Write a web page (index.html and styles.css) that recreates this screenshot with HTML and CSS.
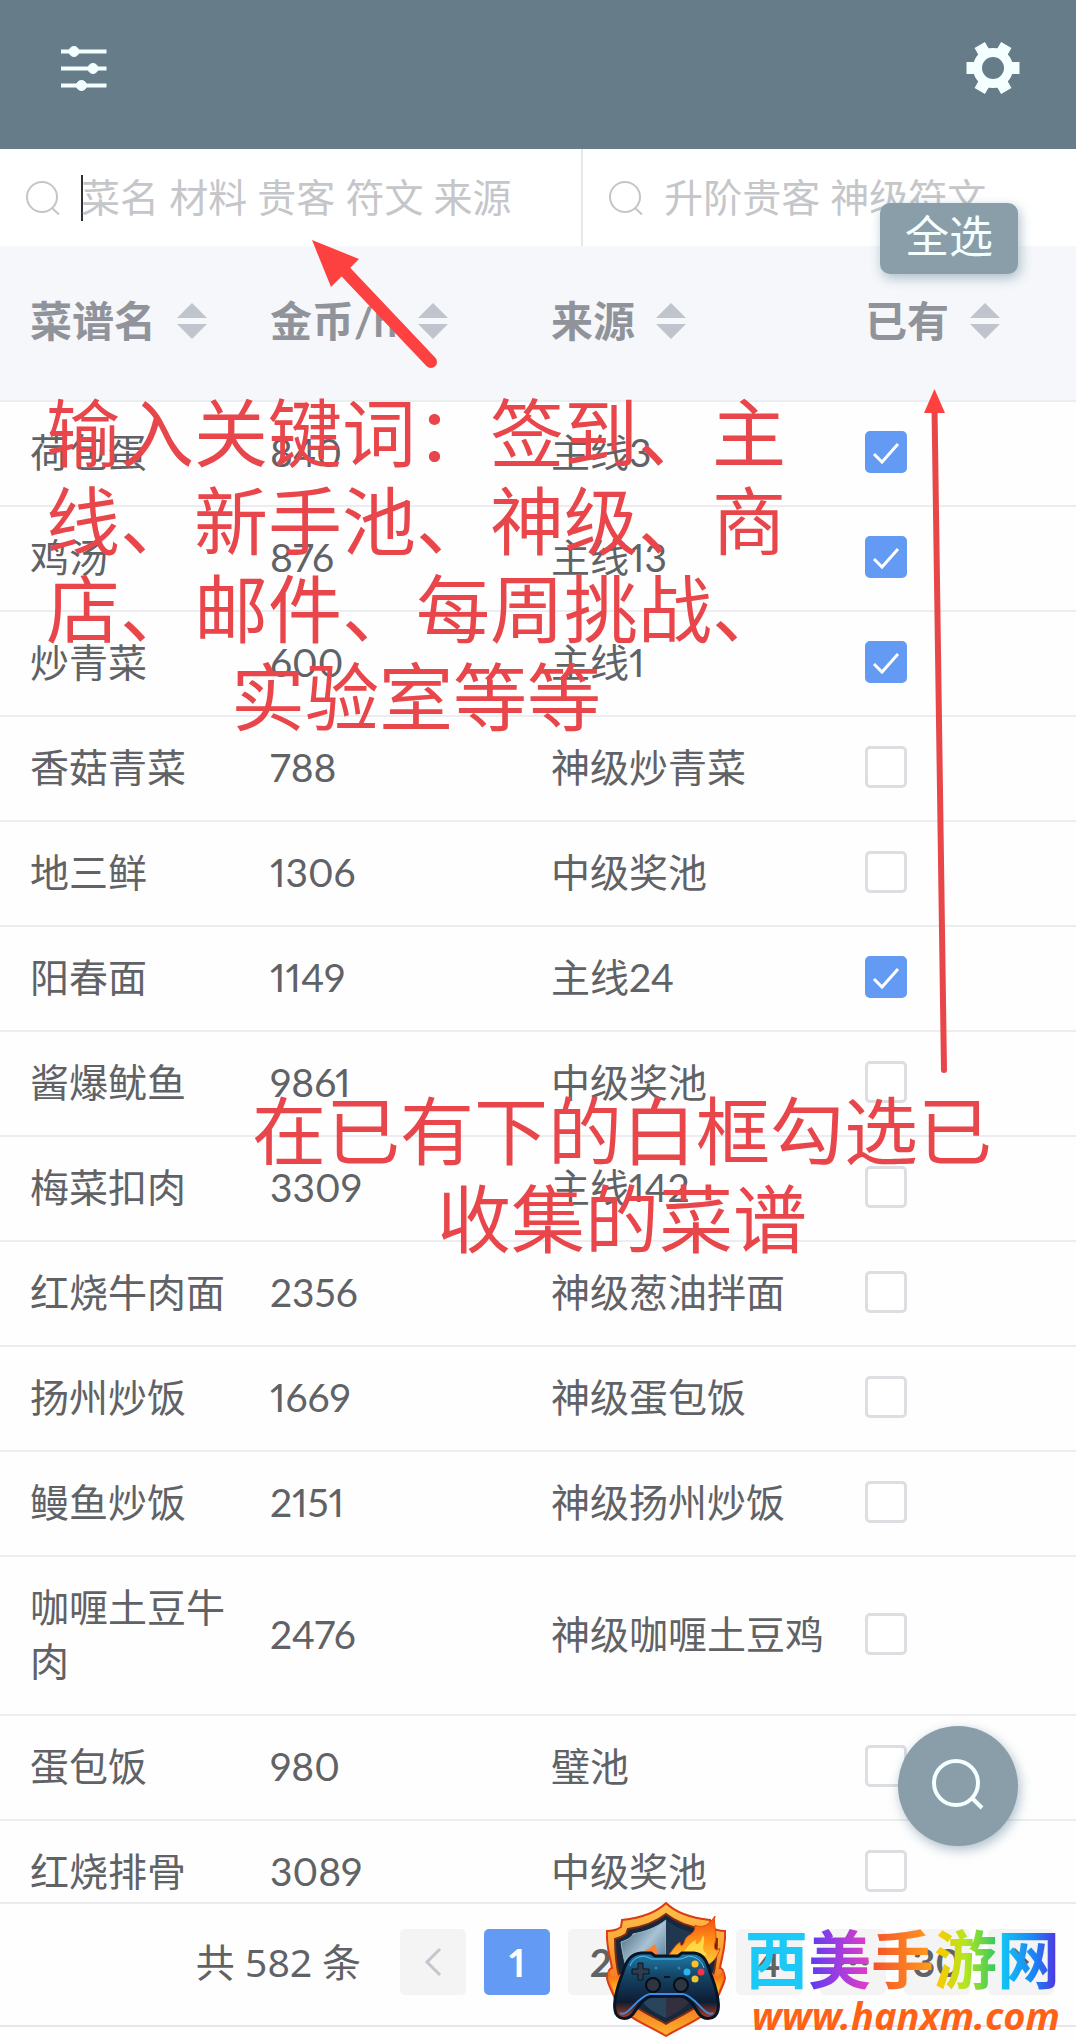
FILE: index.html
```html
<!DOCTYPE html>
<html lang="zh-CN">
  <head>
    <meta charset="UTF-8" />
    <meta name="viewport" content="width=device-width, initial-scale=1.0" />
    <title>菜谱</title>
    <link rel="stylesheet" href="styles.css">
  </head>
  <body>
    <header class="topbar">
      <button type="button" class="icon-button" aria-label="筛选">
        <svg width="56" height="56" viewBox="0 0 56 56" fill="#f4ffff" stroke="#f4ffff">
          <path d="M6 11.500H51.500M6 28.500H51.500M6 45.500H51.500" stroke-width="4" />
          <circle cx="19" cy="11.500" r="5" />
          <circle cx="38" cy="28.500" r="5" />
          <circle cx="26.500" cy="45.500" r="5" />
        </svg>
      </button>
      <button type="button" class="icon-button" aria-label="设置">
        <svg width="56" height="56" viewBox="-28 -28 56 56" fill="#f4ffff">
          <circle r="15.500" fill="none" stroke="#f4ffff" stroke-width="9" />
          <path d="M-26.500 -6H-14V6H-26.500Z" />
          <path d="M-26.500 -6H-14V6H-26.500Z" transform="rotate(60)" />
          <path d="M-26.500 -6H-14V6H-26.500Z" transform="rotate(120)" />
          <path d="M-26.500 -6H-14V6H-26.500Z" transform="rotate(180)" />
          <path d="M-26.500 -6H-14V6H-26.500Z" transform="rotate(240)" />
          <path d="M-26.500 -6H-14V6H-26.500Z" transform="rotate(300)" />
        </svg>
      </button>
    </header>

    <div class="search-row">
      <div class="search-box search-main">
        <svg class="search-icon" width="34" height="34" viewBox="0 0 34 34" fill="none" stroke="#c3c5c9" stroke-width="2">
          <circle cx="16" cy="16" r="15" />
          <path d="M26 27L33 33.500" />
        </svg>
        <span class="cursor"></span>
        <input type="text" id="keyword" aria-label="关键词" placeholder="菜名 材料 贵客 符文 来源" />
      </div>
      <div class="search-box">
        <svg class="search-icon" width="34" height="34" viewBox="0 0 34 34" fill="none" stroke="#c3c5c9" stroke-width="2">
          <circle cx="16" cy="16" r="15" />
          <path d="M26 27L33 33.500" />
        </svg>
        <input type="text" id="guest" aria-label="升阶贵客" placeholder="升阶贵客 神级符文" />
      </div>
    </div>

    <main class="table-wrap">
      <table class="recipe-table">
        <thead>
          <tr>
            <th class="col-name"><div class="th-inner">菜谱名 <span class="sort"></span></div></th>
            <th class="col-gold"><div class="th-inner">金币/h <span class="sort"></span></div></th>
            <th class="col-source"><div class="th-inner">来源 <span class="sort"></span></div></th>
            <th class="col-own"><div class="th-inner">已有 <span class="sort"></span></div></th>
          </tr>
        </thead>
        <tbody>
          <tr><td>荷包蛋</td><td>840</td><td>主线3</td><td><input type="checkbox" aria-label="荷包蛋" checked /></td></tr>
          <tr><td>鸡汤</td><td>876</td><td>主线13</td><td><input type="checkbox" aria-label="鸡汤" checked /></td></tr>
          <tr><td>炒青菜</td><td>600</td><td>主线1</td><td><input type="checkbox" aria-label="炒青菜" checked /></td></tr>
          <tr><td>香菇青菜</td><td>788</td><td>神级炒青菜</td><td><input type="checkbox" aria-label="香菇青菜" /></td></tr>
          <tr><td>地三鲜</td><td>1306</td><td>中级奖池</td><td><input type="checkbox" aria-label="地三鲜" /></td></tr>
          <tr><td>阳春面</td><td>1149</td><td>主线24</td><td><input type="checkbox" aria-label="阳春面" checked /></td></tr>
          <tr><td>酱爆鱿鱼</td><td>9861</td><td>中级奖池</td><td><input type="checkbox" aria-label="酱爆鱿鱼" /></td></tr>
          <tr><td>梅菜扣肉</td><td>3309</td><td>主线142</td><td><input type="checkbox" aria-label="梅菜扣肉" /></td></tr>
          <tr><td>红烧牛肉面</td><td>2356</td><td>神级葱油拌面</td><td><input type="checkbox" aria-label="红烧牛肉面" /></td></tr>
          <tr><td>扬州炒饭</td><td>1669</td><td>神级蛋包饭</td><td><input type="checkbox" aria-label="扬州炒饭" /></td></tr>
          <tr><td>鳗鱼炒饭</td><td>2151</td><td>神级扬州炒饭</td><td><input type="checkbox" aria-label="鳗鱼炒饭" /></td></tr>
          <tr><td>咖喱土豆牛肉</td><td>2476</td><td>神级咖喱土豆鸡</td><td><input type="checkbox" aria-label="咖喱土豆牛肉" /></td></tr>
          <tr><td>蛋包饭</td><td>980</td><td>璧池</td><td><input type="checkbox" aria-label="蛋包饭" /></td></tr>
          <tr><td>红烧排骨</td><td>3089</td><td>中级奖池</td><td><input type="checkbox" aria-label="红烧排骨" /></td></tr>
        </tbody>
      </table>
    </main>

    <nav class="pagination" aria-label="分页">
      <span class="total">共 582 条</span>
      <button type="button" aria-label="上一页">
        <svg width="20" height="30" viewBox="0 0 20 30" fill="none" stroke="#c3c6cc" stroke-width="3"><path d="M17 2L4 15L17 28" /></svg>
      </button>
      <button type="button" class="active">1</button>
      <button type="button">2</button>
      <button type="button">3</button>
      <button type="button">4</button>
      <button type="button" aria-label="更多">
        <svg width="32" height="8" viewBox="0 0 32 8" fill="#606266"><circle cx="4" cy="4" r="3.500" /><circle cx="16" cy="4" r="3.500" /><circle cx="28" cy="4" r="3.500" /></svg>
      </button>
      <button type="button">30</button>
      <button type="button" aria-label="下一页">
        <svg width="20" height="30" viewBox="0 0 20 30" fill="none" stroke="#606266" stroke-width="3"><path d="M3 2L16 15L3 28" /></svg>
      </button>
    </nav>

    <button type="button" class="select-all">全选</button>
    <button type="button" class="fab" aria-label="搜索">
      <svg width="54" height="54" viewBox="0 0 54 54" fill="none" stroke="#f4ffff" stroke-width="4">
        <circle cx="25" cy="24" r="22" />
        <path d="M41 39L51 49" />
      </svg>
    </button>

    <!-- 操作说明 -->
    <p class="note note-search">输入关键词：签到、主线、新手池、神级、商店、邮件、每周挑战、实验室等等</p>
    <p class="note note-own">在已有下的白框勾选已收集的菜谱</p>
    <svg class="arrow arrow-search" width="130" height="136" viewBox="0 0 130 136">
      <path d="M32 30L121 124" stroke="#fd4141" stroke-width="12" stroke-linecap="round" />
      <path d="M2 2L49 21L21 49Z" fill="#fd4141" />
    </svg>
    <svg class="arrow arrow-own" width="30" height="690" viewBox="0 0 30 690">
      <path d="M14.500 20L24 683" stroke="#e94649" stroke-width="6" stroke-linecap="round" />
      <path d="M14.500 2L25 26H4Z" fill="#fd4141" />
    </svg>

    <!-- logo -->
    <div class="brand">
      <svg class="brand-shield" width="120" height="136" viewBox="0 0 120 136">
        <defs>
          <linearGradient id="gold" x1="0" y1="0" x2="0" y2="1">
            <stop offset="0" stop-color="#ffc04a" />
            <stop offset="0.35" stop-color="#f9a337" />
            <stop offset="0.7" stop-color="#f0641c" />
            <stop offset="1" stop-color="#ffb52e" />
          </linearGradient>
          <linearGradient id="steel" x1="0" y1="0" x2="1" y2="1">
            <stop offset="0" stop-color="#35556f" />
            <stop offset="0.5" stop-color="#a9c3d4" />
            <stop offset="1" stop-color="#3f6480" />
          </linearGradient>
          <linearGradient id="fire" x1="0" y1="0" x2="0" y2="1">
            <stop offset="0" stop-color="#f04a12" />
            <stop offset="0.5" stop-color="#ff9416" />
            <stop offset="1" stop-color="#ffd040" />
          </linearGradient>
          <linearGradient id="pad" x1="0" y1="0" x2="0" y2="1">
            <stop offset="0" stop-color="#1f7dac" />
            <stop offset="0.35" stop-color="#154466" />
            <stop offset="0.75" stop-color="#0d1c33" />
            <stop offset="1" stop-color="#b8401c" />
          </linearGradient>
        </defs>
        <path d="M60 1C50 11 34 16 16 18L15 25C11 28 6 29 1 29C0 44 4 54 6 66C4 66 2 70 1 76C2 84 8 92 10 100C20 116 40 122 60 134C80 122 100 116 110 100C112 92 118 84 119 76C118 70 116 66 114 66C116 54 120 44 119 29C114 29 109 28 105 25L104 18C86 16 70 11 60 1Z" fill="url(#gold)" stroke="#dc3b12" stroke-width="2" />
        <path d="M60 12C50 20 36 25 22 27L20 32C16 35 13 36 9 37C9 62 14 92 29 104C38 111 50 116 60 122C70 116 82 111 91 104C106 92 111 62 111 37C107 36 104 35 100 32L98 27C84 25 70 20 60 12Z" fill="#17283d" stroke="#7d2c12" stroke-width="2" />
        <path d="M60 18C50 26 38 30 27 32C25 36 21 38 15 40C17 54 19 64 24 74H60Z" fill="url(#steel)" stroke="#9ab9cf" stroke-width="1" />
        <path d="M60 18C70 26 82 30 93 32C95 36 99 38 105 40C103 54 101 64 96 74H60Z" fill="#20384f" />
        <path d="M34 96H60V116C50 111 40 107 34 96Z" fill="#29455b" />
        <path d="M60 96H86C80 107 70 111 60 116Z" fill="#322f3e" />
        <path d="M60 56C66 50 68 44 74 40C74 45 77 45 79 38C81 32 90 33 89 23C96 27 103 23 109 14C107 24 112 30 109 41C107 48 111 50 114 46C112 56 105 62 98 65L88 56Z" fill="url(#fire)" stroke="#e64a12" stroke-width="1" />
        <path d="M72 54C80 50 82 41 90 38C88 44 94 44 97 33C101 41 93 46 101 52L95 57Z" fill="#ffd747" />
        <path d="M35 52C38 48 43 48 49 42C50 48 53 50 52 54Z" fill="#ff812b" />
        <path d="M2 67C1 78 7 83 9 94L18 70L8 76C5 75 3 71 2 67ZM118 67C118 80 112 86 112 94L104 69L112 76Z" fill="url(#fire)" />
        <path d="M35 51H45L49 54H72L76 51H88C98 52 101 60 104 70C109 83 114 98 112 108C110 118 97 120 91 109C86 101 82 95 75 94H46C39 95 35 101 29 109C23 120 10 118 9 108C7 98 12 83 17 70C20 60 24 52 35 51Z" fill="url(#pad)" stroke="#071326" stroke-width="3" />
        <path d="M24 64C27 56 32 55 38 54L46 57H75L83 54C92 55 96 60 98 66" fill="none" stroke="#55c4ec" stroke-width="1" />
        <path d="M14 111C22 116 31 94 44 92H77C90 94 99 116 107 111" fill="none" stroke="#3c8ce8" stroke-width="2" />
        <path d="M32 61H37V67H43V72H37V78H32V72H26V67H32Z" fill="#323b4b" stroke="#0a1423" stroke-width="1" />
        <circle cx="47" cy="83" r="7" fill="#2e3440" stroke="#070d18" stroke-width="2" />
        <circle cx="75" cy="83" r="7" fill="#2e3440" stroke="#070d18" stroke-width="2" />
        <circle cx="89" cy="62" r="3.500" fill="#ffc22c" />
        <circle cx="81" cy="70" r="3.500" fill="#2ab4ee" />
        <circle cx="95" cy="70" r="3.500" fill="#ef3547" />
        <circle cx="89" cy="77" r="3.500" fill="#f0c42c" />
        <path d="M58 75H64" stroke="#0a1423" stroke-width="2" />
        <circle cx="50" cy="66" r="1.500" fill="#2b88b2" />
        <circle cx="73" cy="66" r="1.500" fill="#2b88b2" />
      </svg>
      <div class="brand-text">
        <span class="brand-name">西美手游网</span>
        <span class="brand-url">www.hanxm.com</span>
      </div>
    </div>
  </body>
</html>
```

FILE: styles.css
```css
* {
  box-sizing: border-box;
}

body {
  position: relative;
  display: flex;
  flex-direction: column;
  height: 100vh;
  margin: 0;
  padding-bottom: 13px;
  overflow: hidden;
  background-color: #fefefe;
  color: #606266;
  font-family: Lato, "Noto Sans CJK SC", sans-serif;
  font-size: 39px;
  font-variant-numeric: proportional-nums;
  line-height: 54px;
}

button {
  padding: 0;
  border: none;
  font: inherit;
  color: inherit;
}

svg {
  display: block;
}

.topbar {
  display: flex;
  justify-content: space-between;
  padding: 40px 55px 53px;
  background-color: #667c88;
}

.icon-button {
  background: none;
}

.search-row {
  display: flex;
  background-color: #fff;
}

.search-box {
  display: flex;
  align-items: center;
  flex: 1;
  min-width: 0;
  height: 97px;
  padding-left: 26px;
}

.search-main {
  flex: none;
  width: 54.2%;
  border-right: 2px solid #e6e7ea;
}

.search-icon {
  flex: none;
  margin-right: 21px;
}

.cursor {
  flex: none;
  width: 2px;
  height: 46px;
  margin-right: -2px;
  background-color: #303133;
}

.search-box input {
  flex: 1;
  min-width: 0;
  padding: 0 0 2px;
  border: none;
  outline: none;
  background: none;
  font: 39px "Noto Sans", "Noto Sans CJK SC", sans-serif;
}

.search-box input::placeholder {
  color: #c5c6c9;
}

.table-wrap {
  flex: 1;
  min-height: 0;
  overflow: hidden;
}

.recipe-table {
  width: 100%;
  table-layout: fixed;
  border-collapse: separate;
  border-spacing: 0;
}

.recipe-table th {
  height: 156px;
  padding: 0 0 4px 30px;
  border-bottom: 2px solid #ebeef1;
  background-color: #f5f7fa;
  color: #909399;
  font-size: 42px;
  text-align: left;
}

.recipe-table td {
  padding: 23px 10px 26px 30px;
  border-bottom: 2px solid #ebedf0;
}

.recipe-table td:nth-child(3) {
  white-space: nowrap;
}

.col-name {
  width: 240px;
}

.col-gold {
  width: 281px;
}

.col-source {
  width: 314px;
}

.th-inner {
  display: flex;
  align-items: center;
  gap: 21px;
}

/* sort arrows */
.sort {
  display: flex;
  flex-direction: column;
  gap: 6px;
}

.sort::before,
.sort::after {
  content: "";
  border: 15px solid transparent;
  border-top-width: 0;
  border-bottom-color: #c0c4cc;
}

.sort::after {
  border-top: 15px solid #c0c4cc;
  border-bottom-width: 0;
}

.recipe-table input {
  display: block;
  appearance: none;
  width: 42px;
  height: 42px;
  margin: 0;
  border: 3px solid #dcdee2;
  border-radius: 5px;
  background-color: #fff;
}

.recipe-table input:checked {
  border-color: #639af3;
  background: #639af3 url("data:image/svg+xml,%3Csvg xmlns='http://www.w3.org/2000/svg' viewBox='0 0 36 36'%3E%3Cpath d='M6 20L14 28L30 10' fill='none' stroke='white' stroke-width='3'/%3E%3C/svg%3E") center / 36px no-repeat;
}

.pagination {
  display: flex;
  align-items: center;
  justify-content: flex-end;
  gap: 18px;
  padding: 25px 22px 30px 0;
  border-top: 2px solid #e9ebee;
  border-bottom: 2px solid #e6e7ea;
}

.pagination .total {
  margin-right: 21px;
  font-family: "Noto Sans", "Noto Sans CJK SC", sans-serif;
}

.pagination button {
  display: flex;
  align-items: center;
  justify-content: center;
  width: 66px;
  height: 66px;
  border-radius: 5px;
  background-color: #f4f4f5;
  font-weight: bold;
}

.pagination button.active {
  background-color: #639af3;
  color: #fff;
}

/* floating buttons */
.select-all,
.fab {
  position: absolute;
  right: 58px;
  background-color: #8a9eaa;
  color: #f4ffff;
  box-shadow: 2px 4px 12px rgba(80, 115, 140, 0.45);
}

.select-all {
  top: 203px;
  padding: 6px 25px 11px;
  border-radius: 10px;
  font-size: 44px;
}

.fab {
  bottom: 194px;
  display: flex;
  align-items: center;
  justify-content: center;
  width: 120px;
  height: 120px;
  border-radius: 50%;
}

/* red notes */
.note {
  position: absolute;
  width: 750px;
  margin: 0;
  color: #e8464a;
  font-family: "Noto Sans CJK SC", sans-serif;
  font-size: 74px;
  line-height: 88px;
  text-align: center;
  pointer-events: none;
}

.note-search {
  top: 385px;
  left: 41px;
}

.note-own {
  top: 1083px;
  left: 247px;
}

.arrow {
  position: absolute;
  pointer-events: none;
}

.arrow-search {
  top: 238px;
  left: 310px;
}

.arrow-own {
  top: 387px;
  left: 920px;
}

.brand {
  position: absolute;
  right: 16px;
  bottom: 2px;
  display: flex;
  gap: 19px;
}

.brand-text {
  display: flex;
  flex-direction: column;
  padding-top: 18px;
}

.brand-name {
  align-self: flex-start;
  background: linear-gradient(90deg, #1cc8f5 0 20%, #5a3cf5 20%, #e23cc8 39%, #f4502c 40%, #ff9a1c 59%, #ffc800 61%, #b4e61e 70%, #30c864 80%, #12c8f5 81%, #1c82f5 92%, #5a28dc 100%);
  background-clip: text;
  color: transparent;
  font-family: "Noto Sans CJK SC", sans-serif;
  font-size: 63px;
  font-weight: 700;
  line-height: 72px;
}

.brand-url {
  align-self: flex-end;
  color: #ff6216;
  font-family: "Noto Sans", sans-serif;
  font-size: 38px;
  font-style: italic;
  font-weight: bold;
  line-height: 46px;
}
```
